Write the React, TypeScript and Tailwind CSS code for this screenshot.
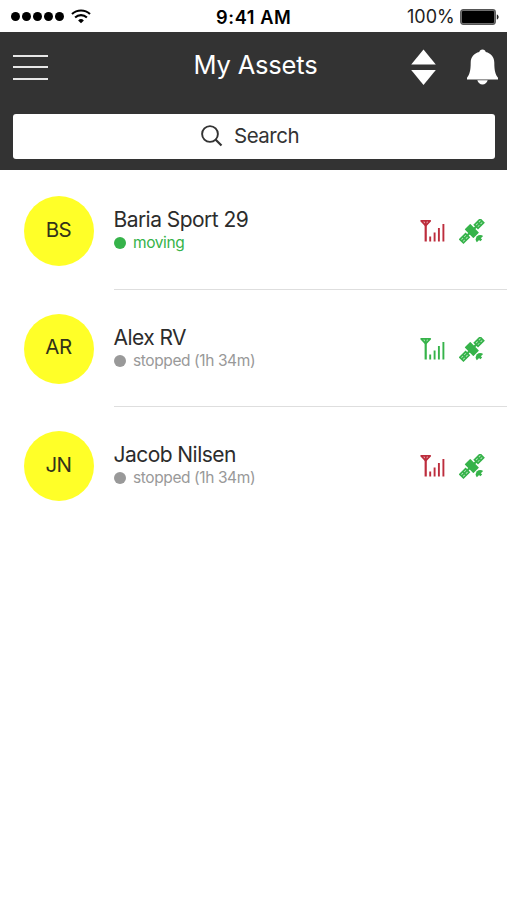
import React from "react";

interface AssetProps {
  initials: string;
  name: string;
  status: string;
  moving: boolean;
  signal: boolean;
}

const assets: AssetProps[] = [
  { initials: "BS", name: "Baria Sport 29", status: "moving", moving: true, signal: false },
  { initials: "AR", name: "Alex RV", status: "stopped (1h 34m)", moving: false, signal: true },
  { initials: "JN", name: "Jacob Nilsen", status: "stopped (1h 34m)", moving: false, signal: false },
];

const SignalIcon = ({ className }: { className: string }) => (
  <svg className={className} width="26" height="24" viewBox="0 0 26 24" fill="none" stroke="currentColor">
    <path d="M1.2 1.8h9L5.7 6.6z" strokeWidth="1.8" strokeLinejoin="round" />
    <path d="M5.7 2v20.5" strokeWidth="2.2" />
    <path d="M10.2 17.5v5M14.6 13.5v9M18.9 9v13.5M23.4 5v17.5" strokeWidth="1.9" />
  </svg>
);

const SatelliteIcon = ({ className }: { className: string }) => (
  <svg className={className} width="26" height="26" viewBox="0 0 26 26" fill="none" stroke="currentColor">
    <g transform="translate(12.8 12) rotate(-45)">
      <rect x="-4" y="-6.2" width="8" height="12.4" rx="0.6" fill="currentColor" stroke="none" />
      <path d="M-6.5 0h13" strokeWidth="2.2" />
      <g strokeWidth="1.7">
        <rect x="6.3" y="-2.5" width="8" height="5" fill="currentColor" fillOpacity="0.3" />
        <path d="M6.3 0h8M10.3 -2.5v5" />
        <rect x="-14.3" y="-2.5" width="8" height="5" fill="currentColor" fillOpacity="0.3" />
        <path d="M-14.3 0h8M-10.3 -2.5v5" />
      </g>
      <path d="M-4.4 11.6a4.4 4.2 0 0 1 8.8 0z" fill="currentColor" stroke="none" />
      <path d="M0 10.5v2.8" strokeWidth="2.6" />
    </g>
  </svg>
);

const StatusBar = () => (
  <div className="flex h-8 items-center bg-white text-black">
    <div className="flex w-[216px] items-center pl-[10.5px] pt-[1px]">
      <div className="flex gap-[2px]">
        {[0, 1, 2, 3, 4].map((i) => (
          <span key={i} className="size-[9.2px] rounded-full bg-black" />
        ))}
      </div>
      <svg className="ml-[7px]" width="20" height="15" viewBox="0 0 20 15" fill="none" stroke="#000" strokeWidth="2.1">
        <path d="M1 5.1a13 13 0 0 1 18 0" />
        <path d="M4.1 8.5a8.6 8.6 0 0 1 11.8 0" />
        <path d="M10 14.3l-2.9-2.9a4.2 4.2 0 0 1 5.8 0z" fill="#000" stroke="none" />
      </svg>
    </div>
    <span className="w-[191px] whitespace-nowrap pt-[1px] text-[18.2px] leading-8 font-semibold tracking-[0.6px]">9:41 AM</span>
    <span className="w-[53px] whitespace-nowrap pt-[2px] text-[18px] leading-8 text-[#222222]">100%</span>
    <svg className="mt-[2px]" width="40" height="16" viewBox="0 0 40 16">
      <rect x="0.7" y="0.7" width="34.6" height="14.6" rx="2.5" fill="#777" stroke="#555" strokeWidth="1.2" />
      <rect x="2" y="2" width="32" height="12" rx="1" fill="#000" />
      <path d="M36.8 5.5c2.4.5 2.4 4.5 0 5z" fill="#222" />
    </svg>
  </div>
);

const Header = () => (
  <div className="h-[138px] bg-[#333333] px-[12.5px]">
    <div className="flex h-[81.5px] items-start justify-between text-white">
      <div className="flex w-[84px] flex-col gap-[9.8px] pt-[22.5px]">
        <span className="h-[2px] w-[35.5px] bg-[#e6e6e6]" />
        <span className="h-[2px] w-[35.5px] bg-[#e6e6e6]" />
        <span className="h-[2px] w-[35.5px] bg-[#e6e6e6]" />
      </div>
      <h1 className="mt-[16px] ml-[3px] whitespace-nowrap text-[25.5px] leading-[34px] tracking-[-0.2px]">My Assets</h1>
      <div className="flex gap-[31px] pt-[17px]">
        <svg width="25" height="37" viewBox="0 0 25 37" fill="#fff">
          <path d="M12.5 0.5L24.8 15.5H0.2z" />
          <path d="M12.5 36L24.8 21H0.2z" />
        </svg>
        <svg className="-mr-[5px]" width="32" height="37" viewBox="0 0 32 37" fill="#fff">
          <path d="M15.5 0.6c1.8 0 3 1 3.2 2.5 5.4 1.3 8.6 5.2 8.6 10.5 0 8.5 1.2 12 3.7 15.2v1.7H0v-1.7c2.5-3.2 3.7-6.7 3.7-15.2 0-5.3 3.2-9.2 8.6-10.5 0.2-1.5 1.4-2.5 3.2-2.5z" />
          <path d="M10.3 31.3h10.4c-.8 2.7-2.7 4.2-5.2 4.2s-4.4-1.5-5.2-4.2z" />
        </svg>
      </div>
    </div>
    <div className="flex h-[45px] items-center rounded-[3px] bg-white pl-[188px] text-[#333333]">
      <svg width="22" height="22" viewBox="0 0 22 22" fill="none" stroke="currentColor" strokeWidth="1.9">
        <circle cx="9" cy="9" r="7.9" />
        <path d="M14.5 14.5l6 6" strokeWidth="2.2" />
      </svg>
      <span className="ml-[11.5px] -mt-[1px] text-[20.5px] leading-[45px] tracking-[-0.5px]">Search</span>
    </div>
  </div>
);

const AssetRow = ({ asset }: { asset: AssetProps }) => (
  <div className="group flex h-[117.7px] pl-[23.5px]">
    <div className="mt-[24px] flex size-[70px] items-center justify-center rounded-full bg-[#ffff28] text-[20.5px] leading-none tracking-[-0.5px] text-[#333318]">
      <span className="-mt-[2px]">{asset.initials}</span>
    </div>
    <div className="ml-[20px] flex flex-1 border-b border-[#dedede] group-last:border-transparent">
      <div className="flex-1 pt-[35px]">
        <h2 className="whitespace-nowrap text-[21px] leading-[26px] tracking-[-0.55px] text-[#2c2c2c]">{asset.name}</h2>
        <div className={asset.moving ? "flex items-center text-[#36b34a]" : "flex items-center text-[#999999]"}>
          <span className="size-[12px] rounded-full bg-current" />
          <span className="ml-[7.5px] whitespace-nowrap text-[15.5px] leading-[20px] tracking-[-0.4px]">{asset.status}</span>
        </div>
      </div>
      <div className="flex w-[87px] gap-[13px] pt-[47px]">
        <SignalIcon className={asset.signal ? "text-[#36b34a]" : "text-[#bd2d3d]"} />
        <SatelliteIcon className="text-[#36b34a]" />
      </div>
    </div>
  </div>
);

const App = () => {
  return (
    <div className="h-[900px] w-[507px] overflow-hidden bg-white font-['Inter','Liberation_Sans',sans-serif]">
      <StatusBar />
      <Header />
      <div className="pt-[2px]">
        {assets.map((asset) => (
          <AssetRow key={asset.initials} asset={asset} />
        ))}
      </div>
    </div>
  );
};

export default App;
